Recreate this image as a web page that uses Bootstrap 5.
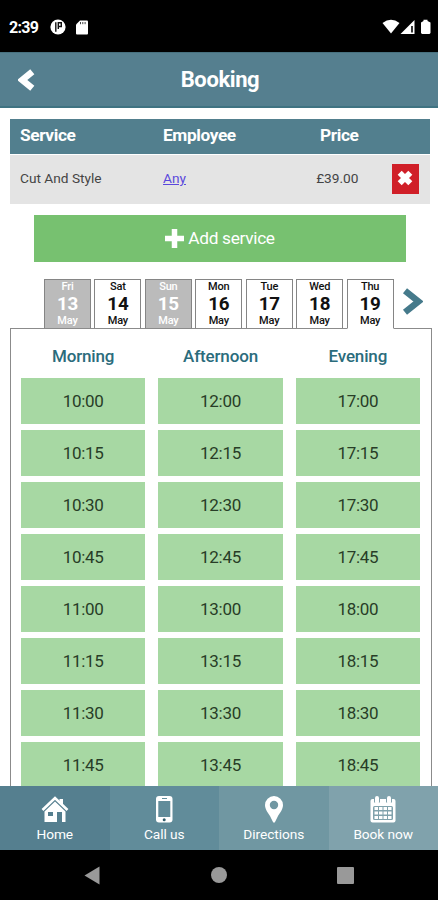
<!DOCTYPE html>
<html lang="en">
<head>
<meta charset="utf-8">
<meta name="viewport" content="width=device-width, initial-scale=1">
<title>Booking</title>
<link href="https://cdn.jsdelivr.net/npm/bootstrap@5.3.0/dist/css/bootstrap.min.css" rel="stylesheet">
<style>
body{font-family:Roboto,"Liberation Sans",sans-serif;background:#fff;color:#333}
svg{display:block;flex:none}
.screen{width:438px;height:900px}
.status{height:52px;padding:2px 7px 0 9px;font-size:16px;font-weight:700;line-height:20px}
.clock{width:30px;letter-spacing:-.7px;padding-top:1px}
.disc{margin-left:10.500px}
.memory{margin-left:10px}
.topbar{height:56px;background:#557f8f;border-top:1px solid #47717f;border-bottom:2px solid #3f7382;padding:1px 18px 0}
.topbar h1{font-size:22px;letter-spacing:-.4px;padding-top:1px}
.spacer{width:15px}
.services{margin:11px 8px 0 9.5px}
.services .line{display:grid;grid-template-columns:143px 133px 62.5px 1fr;padding-left:10.5px}
.services .head{height:34.500px;background:#527f8e;font-size:17.3px;font-weight:700;letter-spacing:-.38px}
.services .item{height:49.500px;margin-top:1px;background:#e4e4e4;font-size:13.7px;color:#444}
.services .item span,.services .item a{padding-bottom:2px}
.services a{color:#5a48dc}
.remove{width:27px;height:30px;background:#d01f28;border:0;margin-left:33.5px;padding:0 2px 3px 0}
.add{height:47px;margin:11px 32px 0 34px;background:#77c170;font-size:17.3px;letter-spacing:-.32px;gap:4px}
.dates{height:50px;margin:16.500px 0 -1px 44px;gap:3.45px}
.day{width:47px;border:1px solid #858585;background:#fff;color:#111;font-size:11px;letter-spacing:-.2px;line-height:14px;font-weight:500}
.day b{font-size:18.8px;line-height:20px;font-weight:700}
.day.closed{background:#bbb;color:#fff}
.day.chosen{border-bottom-color:#fff;position:relative}
.next{margin:9px 0 0 4px}
.slots{border:1px solid #8b8b8b;border-bottom:0;margin:0 6px 0 10px;padding:0 11px 0 10px;column-gap:13px;min-height:0;overflow:hidden}
.slots h2{font-size:17px;font-weight:500;letter-spacing:-.15px;color:#2b6c7c;height:49.500px;margin:0;padding-top:6px;flex:none}
.slot{height:46px;background:#a7d8a3;color:#283d27;font-size:17px;letter-spacing:-.3px;margin-bottom:6px;padding-top:1px;flex:none}
.tabs{height:64px}
.tabs a{font-size:13.7px;line-height:16px;padding-top:9px;letter-spacing:-.05px}
.tabs svg{margin-bottom:3px}
.t1{background:#557f8f}.t2{background:#618c9a}.t3{background:#7097a2}.t4{background:#80a2ac}
.system{height:50px}
.system>div{width:126.8px}
</style>
<script src="https://cdn.jsdelivr.net/npm/bootstrap@5.3.0/dist/js/bootstrap.bundle.min.js"></script>
</head>
<body>
<div class="screen d-flex flex-column overflow-hidden">
  <div class="status bg-black text-white d-flex align-items-center flex-shrink-0">
    <span class="clock">2:39</span>
    <svg class="disc" width="16" height="16" viewBox="0 0 16 16"><circle cx="8" cy="8" r="7.6" fill="#fff"/><path d="M5.8 3.2v9.500M8.300 3.800h3v3.700h-3zM8.300 4v6" fill="none" stroke="#111" stroke-width="1.400"/></svg>
    <svg class="memory" width="12" height="15" viewBox="0 0 12 15"><path d="M4 .5h7q1 0 1 1v12q0 1-1 1H1q-1 0-1-1V4.5z" fill="#fff"/><path d="M4.500 2v2.200M6.800 2v2.200M9.100 2v2.200" stroke="#444" stroke-width="1"/></svg>
    <svg class="ms-auto" width="49" height="16" viewBox="0 0 49 16"><path d="M.5 4Q9 -2.500 17.500 4L9 14.500z" fill="#fff"/><path d="M18.500 15L32.500 1v14z" fill="#fff"/><path d="M30 7v6.500" stroke="#111" stroke-width="1.700"/><path d="M39 3.500L41.500 2V.7h4V2L48.500 3.500V14l-1 1H40l-1-1z" fill="#fff"/></svg>
  </div>
  <header class="topbar d-flex align-items-center justify-content-between text-white flex-shrink-0">
    <svg width="17" height="22" viewBox="0 0 17 22"><path d="M14.300 2.800L4.200 11l10.100 8.200" fill="none" stroke="#fff" stroke-width="6.500"/></svg>
    <h1 class="m-0 fw-bold">Booking</h1>
    <span class="spacer"></span>
  </header>
  <section class="services flex-shrink-0">
    <div class="line head align-items-center text-white"><span>Service</span><span>Employee</span><span class="text-end">Price</span></div>
    <div class="line item align-items-center"><span>Cut And Style</span><a href="#">Any</a><span class="text-end">£39.00</span>
      <button class="remove d-flex align-items-center justify-content-center" aria-label="Remove"><svg width="16" height="16" viewBox="0 0 16 16"><path d="M2.700 2.700l10.600 10.600M13.300 2.700L2.700 13.300" stroke="#fff" stroke-width="5.700"/></svg></button>
    </div>
  </section>
  <button class="add btn rounded-0 border-0 p-0 text-white d-flex align-items-center justify-content-center flex-shrink-0">
    <svg width="19" height="19" viewBox="0 0 19 19"><path d="M9.500 0v19M0 9.500h19" stroke="#fff" stroke-width="5.500"/></svg><span>Add service</span>
  </button>
  <div class="dates d-flex flex-shrink-0">
    <div class="day closed d-flex flex-column align-items-center">Fri<b>13</b>May</div>
    <div class="day d-flex flex-column align-items-center">Sat<b>14</b>May</div>
    <div class="day closed d-flex flex-column align-items-center">Sun<b>15</b>May</div>
    <div class="day d-flex flex-column align-items-center">Mon<b>16</b>May</div>
    <div class="day d-flex flex-column align-items-center">Tue<b>17</b>May</div>
    <div class="day d-flex flex-column align-items-center">Wed<b>18</b>May</div>
    <div class="day chosen d-flex flex-column align-items-center">Thu<b>19</b>May</div>
    <svg class="next" width="22" height="27" viewBox="0 0 22 27"><path d="M4 2.800L17.500 13.500 4 24.200" fill="none" stroke="#457a8b" stroke-width="6.500"/></svg>
  </div>
  <main class="slots d-flex flex-grow-1">
    <div class="d-flex flex-column text-center w-100">
      <h2 class="d-flex justify-content-center align-items-center">Morning</h2>
      <div class="slot d-flex align-items-center justify-content-center">10:00</div><div class="slot d-flex align-items-center justify-content-center">10:15</div><div class="slot d-flex align-items-center justify-content-center">10:30</div><div class="slot d-flex align-items-center justify-content-center">10:45</div><div class="slot d-flex align-items-center justify-content-center">11:00</div><div class="slot d-flex align-items-center justify-content-center">11:15</div><div class="slot d-flex align-items-center justify-content-center">11:30</div><div class="slot d-flex align-items-center justify-content-center">11:45</div>
    </div>
    <div class="d-flex flex-column text-center w-100">
      <h2 class="d-flex justify-content-center align-items-center">Afternoon</h2>
      <div class="slot d-flex align-items-center justify-content-center">12:00</div><div class="slot d-flex align-items-center justify-content-center">12:15</div><div class="slot d-flex align-items-center justify-content-center">12:30</div><div class="slot d-flex align-items-center justify-content-center">12:45</div><div class="slot d-flex align-items-center justify-content-center">13:00</div><div class="slot d-flex align-items-center justify-content-center">13:15</div><div class="slot d-flex align-items-center justify-content-center">13:30</div><div class="slot d-flex align-items-center justify-content-center">13:45</div>
    </div>
    <div class="d-flex flex-column text-center w-100">
      <h2 class="d-flex justify-content-center align-items-center">Evening</h2>
      <div class="slot d-flex align-items-center justify-content-center">17:00</div><div class="slot d-flex align-items-center justify-content-center">17:15</div><div class="slot d-flex align-items-center justify-content-center">17:30</div><div class="slot d-flex align-items-center justify-content-center">17:45</div><div class="slot d-flex align-items-center justify-content-center">18:00</div><div class="slot d-flex align-items-center justify-content-center">18:15</div><div class="slot d-flex align-items-center justify-content-center">18:30</div><div class="slot d-flex align-items-center justify-content-center">18:45</div>
    </div>
  </main>
  <nav class="tabs row g-0 flex-shrink-0">
    <a href="#" class="t1 col-3 d-flex flex-column align-items-center text-white text-decoration-none"><svg width="28" height="28" viewBox="0 0 28 28"><path d="M1.500 15L14 3l12.500 12" fill="none" stroke="#fff" stroke-width="2.600"/><path d="M18.500 4H22v7l-3.500-3z" fill="#fff"/><path d="M14 6.500L24.500 16.500V27H21V17h-5v10H3.500V16.500z" fill="#fff"/><path d="M7 17h5v4H7z" fill="#557f8f"/></svg>Home</a>
    <a href="#" class="t2 col-3 d-flex flex-column align-items-center text-white text-decoration-none"><svg width="28" height="28" viewBox="0 0 28 28"><rect x="6" y="1" width="16.500" height="26.500" rx="3" fill="#fff"/><path d="M8.300 6h12v16h-12z" fill="#618c9a"/><path d="M12 3.500h5" stroke="#618c9a"/><circle cx="14.200" cy="24.800" r="1.500" fill="#315d6b"/></svg>Call us</a>
    <a href="#" class="t3 col-3 d-flex flex-column align-items-center text-white text-decoration-none"><svg width="28" height="28" viewBox="0 0 28 28"><path fill-rule="evenodd" d="M14 1a9 9 0 0 1 9 9c0 4-3 8-5 11l-3 6q-1 1.500-2 0l-3-6C8 18 5 14 5 10a9 9 0 0 1 9-9zm0 4.800a4.200 4.200 0 1 0 0 8.400 4.200 4.200 0 0 0 0-8.400z" fill="#fff"/></svg>Directions</a>
    <a href="#" class="t4 col-3 d-flex flex-column align-items-center text-white text-decoration-none"><svg width="28" height="28" viewBox="0 0 28 28"><rect x="1.500" y="4" width="25" height="23.500" rx="2" fill="#fff"/><path d="M8 1.500v6M20 1.500v6" stroke="#80a2ac" stroke-width="6"/><path d="M8 3v4M20 3v4" stroke="#fff" stroke-width="4" stroke-linecap="round"/><rect x="4" y="11" width="20" height="14" rx="1.500" fill="#80a2ac"/><path d="M5.500 13.500h17M5.500 18h17M5.500 22.500h17" stroke="#fff" stroke-width="3.200" stroke-dasharray="3.500 1"/></svg>Book now</a>
  </nav>
  <div class="system bg-black d-flex align-items-center justify-content-center flex-shrink-0">
    <div class="d-flex justify-content-center"><svg width="16" height="19" viewBox="0 0 16 19"><path d="M.5 9.500L15.500.500v18z" fill="#999"/></svg></div>
    <div class="d-flex justify-content-center"><svg width="16" height="16" viewBox="0 0 16 16"><circle cx="8" cy="8" r="8" fill="#999"/></svg></div>
    <div class="d-flex justify-content-center"><svg width="17" height="17" viewBox="0 0 17 17"><rect width="17" height="17" rx="1" fill="#999"/></svg></div>
  </div>
</div>
</body>
</html>
